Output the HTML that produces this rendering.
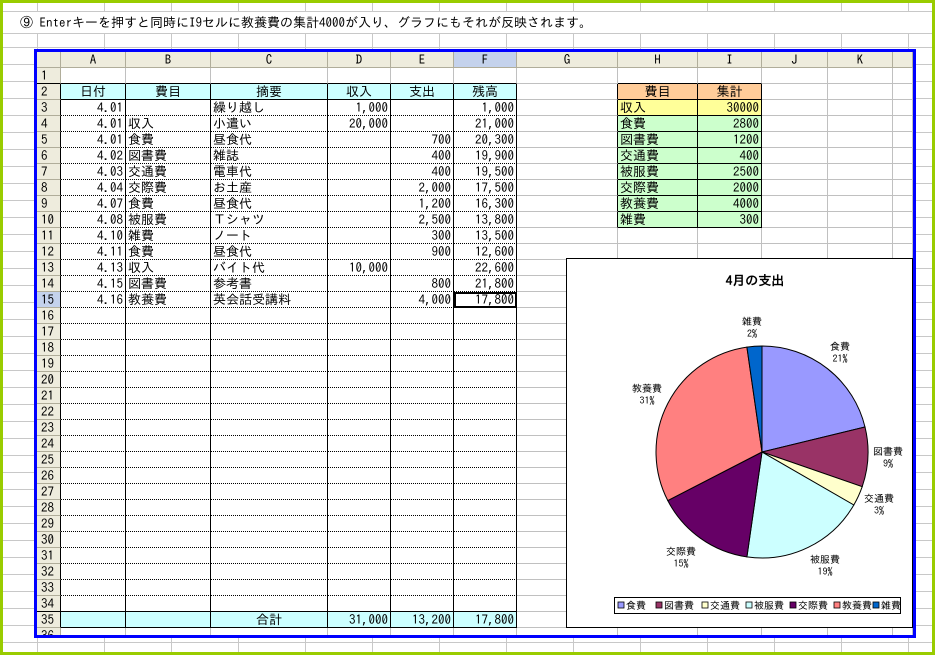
<!DOCTYPE html>
<html><head><meta charset="utf-8">
<style>
*{margin:0;padding:0;box-sizing:border-box}
body{width:935px;height:655px;overflow:hidden;background:#fff;font-family:"IPAGothic","Liberation Mono","Noto Sans CJK JP",monospace;font-size:13px;color:#000;position:relative}
#bg{position:absolute;left:0;top:0;width:935px;height:655px;border:3px solid #99cc00;
background-image:linear-gradient(to right,#c8c8c8 1px,transparent 1px),linear-gradient(to bottom,#c8c8c8 1px,transparent 1px);
background-size:67px 100%,100% 17px;background-position:34px 0,0 10px}
#tx{position:absolute;left:3px;top:11px;width:929px;height:23px;background:#fff;border-top:1px solid #c8c8c8;border-bottom:1px solid #c8c8c8;padding-left:17px;line-height:22px;font-size:13px}
#frame{position:absolute;left:34px;top:49px;width:882px;height:589px;border:3px solid #0000ff;background:#fff;overflow:hidden}
table{border-collapse:separate;border-spacing:0;table-layout:fixed;width:876px}
td{height:16px;padding:0 2px;line-height:15px;border-right:1px solid #c0c0c0;border-bottom:1px solid #c0c0c0;white-space:nowrap;overflow:hidden;font-size:13px}
tr.h td{background:#eeecdd;text-align:center;border-color:#b0ad9a}
td.rn{background:#eeecdd;text-align:left;padding-left:4px;border-color:#b0ad9a}
td.sel{background:#c4d2ec !important}
td.d{border-right:1px solid #000;border-bottom:1px dotted #000}
td.hd{background:#ccffff;border-right:1px solid #000;border-bottom:1px solid #000;text-align:center}
td.tt{background:#ccffff;border-right:1px solid #000;border-bottom:1px solid #000}
td.bb{border-bottom:1px solid #000}
td.br{border-right:1px solid #000}
.r{text-align:right}
td.sh{background:#ffcc99;border-right:1px solid #000;border-bottom:1px solid #000;text-align:center}
td.sy{background:#ffff99;border-right:1px solid #000;border-bottom:1px solid #000}
td.sg{background:#ccffcc;border-right:1px solid #000;border-bottom:1px solid #000}
#chart{position:absolute;left:566px;top:258px}
</style></head><body>
<div id="bg"></div>
<div id="tx">⑨ Enterキーを押すと同時にI9セルに教養費の集計4000が入り、グラフにもそれが反映されます。</div>
<div id="frame">
<table>
<colgroup><col style="width:24px"><col style="width:65px"><col style="width:85px"><col style="width:117px"><col style="width:63px"><col style="width:63px"><col style="width:63px"><col style="width:101px"><col style="width:80px"><col style="width:64px"><col style="width:66px"><col style="width:65px"><col style="width:20px"></colgroup>
<tr class="h"><td></td><td>A</td><td>B</td><td>C</td><td>D</td><td>E</td><td class="sel">F</td><td>G</td><td>H</td><td>I</td><td>J</td><td>K</td><td></td></tr>
<tr><td class="rn bb">1</td><td class="bb"></td><td class="bb"></td><td class="bb"></td><td class="bb"></td><td class="bb"></td><td class="bb"></td><td></td><td class="bb"></td><td class="bb"></td><td></td><td></td><td></td></tr>
<tr><td class="rn br">2</td><td class="hd">日付</td><td class="hd">費目</td><td class="hd">摘要</td><td class="hd">収入</td><td class="hd">支出</td><td class="hd">残高</td><td class="br"></td><td class="sh">費目</td><td class="sh">集計</td><td></td><td></td><td></td></tr>
<tr><td class="rn br">3</td><td class="d r">4.01</td><td class="d"></td><td class="d">繰り越し</td><td class="d r">1,000</td><td class="d r"></td><td class="d r">1,000</td><td class="br"></td><td class="sy">収入</td><td class="sy r">30000</td><td></td><td></td><td></td></tr>
<tr><td class="rn br">4</td><td class="d r">4.01</td><td class="d">収入</td><td class="d">小遣い</td><td class="d r">20,000</td><td class="d r"></td><td class="d r">21,000</td><td class="br"></td><td class="sg">食費</td><td class="sg r">2800</td><td></td><td></td><td></td></tr>
<tr><td class="rn br">5</td><td class="d r">4.01</td><td class="d">食費</td><td class="d">昼食代</td><td class="d r"></td><td class="d r">700</td><td class="d r">20,300</td><td class="br"></td><td class="sg">図書費</td><td class="sg r">1200</td><td></td><td></td><td></td></tr>
<tr><td class="rn br">6</td><td class="d r">4.02</td><td class="d">図書費</td><td class="d">雑誌</td><td class="d r"></td><td class="d r">400</td><td class="d r">19,900</td><td class="br"></td><td class="sg">交通費</td><td class="sg r">400</td><td></td><td></td><td></td></tr>
<tr><td class="rn br">7</td><td class="d r">4.03</td><td class="d">交通費</td><td class="d">電車代</td><td class="d r"></td><td class="d r">400</td><td class="d r">19,500</td><td class="br"></td><td class="sg">被服費</td><td class="sg r">2500</td><td></td><td></td><td></td></tr>
<tr><td class="rn br">8</td><td class="d r">4.04</td><td class="d">交際費</td><td class="d">お土産</td><td class="d r"></td><td class="d r">2,000</td><td class="d r">17,500</td><td class="br"></td><td class="sg">交際費</td><td class="sg r">2000</td><td></td><td></td><td></td></tr>
<tr><td class="rn br">9</td><td class="d r">4.07</td><td class="d">食費</td><td class="d">昼食代</td><td class="d r"></td><td class="d r">1,200</td><td class="d r">16,300</td><td class="br"></td><td class="sg">教養費</td><td class="sg r">4000</td><td></td><td></td><td></td></tr>
<tr><td class="rn br">10</td><td class="d r">4.08</td><td class="d">被服費</td><td class="d">Ｔシャツ</td><td class="d r"></td><td class="d r">2,500</td><td class="d r">13,800</td><td class="br"></td><td class="sg">雑費</td><td class="sg r">300</td><td></td><td></td><td></td></tr>
<tr><td class="rn br">11</td><td class="d r">4.10</td><td class="d">雑費</td><td class="d">ノート</td><td class="d r"></td><td class="d r">300</td><td class="d r">13,500</td><td></td><td></td><td></td><td></td><td></td><td></td></tr>
<tr><td class="rn br">12</td><td class="d r">4.11</td><td class="d">食費</td><td class="d">昼食代</td><td class="d r"></td><td class="d r">900</td><td class="d r">12,600</td><td></td><td></td><td></td><td></td><td></td><td></td></tr>
<tr><td class="rn br">13</td><td class="d r">4.13</td><td class="d">収入</td><td class="d">バイト代</td><td class="d r">10,000</td><td class="d r"></td><td class="d r">22,600</td><td></td><td></td><td></td><td></td><td></td><td></td></tr>
<tr><td class="rn br">14</td><td class="d r">4.15</td><td class="d">図書費</td><td class="d">参考書</td><td class="d r"></td><td class="d r">800</td><td class="d r">21,800</td><td></td><td></td><td></td><td></td><td></td><td></td></tr>
<tr><td class="rn br sel">15</td><td class="d r">4.16</td><td class="d">教養費</td><td class="d">英会話受講料</td><td class="d r"></td><td class="d r">4,000</td><td class="d r" style="outline:2px solid #000;outline-offset:-2px">17,800</td><td></td><td></td><td></td><td></td><td></td><td></td></tr>
<tr><td class="rn br">16</td><td class="d"></td><td class="d"></td><td class="d"></td><td class="d"></td><td class="d"></td><td class="d"></td><td></td><td></td><td></td><td></td><td></td><td></td></tr>
<tr><td class="rn br">17</td><td class="d"></td><td class="d"></td><td class="d"></td><td class="d"></td><td class="d"></td><td class="d"></td><td></td><td></td><td></td><td></td><td></td><td></td></tr>
<tr><td class="rn br">18</td><td class="d"></td><td class="d"></td><td class="d"></td><td class="d"></td><td class="d"></td><td class="d"></td><td></td><td></td><td></td><td></td><td></td><td></td></tr>
<tr><td class="rn br">19</td><td class="d"></td><td class="d"></td><td class="d"></td><td class="d"></td><td class="d"></td><td class="d"></td><td></td><td></td><td></td><td></td><td></td><td></td></tr>
<tr><td class="rn br">20</td><td class="d"></td><td class="d"></td><td class="d"></td><td class="d"></td><td class="d"></td><td class="d"></td><td></td><td></td><td></td><td></td><td></td><td></td></tr>
<tr><td class="rn br">21</td><td class="d"></td><td class="d"></td><td class="d"></td><td class="d"></td><td class="d"></td><td class="d"></td><td></td><td></td><td></td><td></td><td></td><td></td></tr>
<tr><td class="rn br">22</td><td class="d"></td><td class="d"></td><td class="d"></td><td class="d"></td><td class="d"></td><td class="d"></td><td></td><td></td><td></td><td></td><td></td><td></td></tr>
<tr><td class="rn br">23</td><td class="d"></td><td class="d"></td><td class="d"></td><td class="d"></td><td class="d"></td><td class="d"></td><td></td><td></td><td></td><td></td><td></td><td></td></tr>
<tr><td class="rn br">24</td><td class="d"></td><td class="d"></td><td class="d"></td><td class="d"></td><td class="d"></td><td class="d"></td><td></td><td></td><td></td><td></td><td></td><td></td></tr>
<tr><td class="rn br">25</td><td class="d"></td><td class="d"></td><td class="d"></td><td class="d"></td><td class="d"></td><td class="d"></td><td></td><td></td><td></td><td></td><td></td><td></td></tr>
<tr><td class="rn br">26</td><td class="d"></td><td class="d"></td><td class="d"></td><td class="d"></td><td class="d"></td><td class="d"></td><td></td><td></td><td></td><td></td><td></td><td></td></tr>
<tr><td class="rn br">27</td><td class="d"></td><td class="d"></td><td class="d"></td><td class="d"></td><td class="d"></td><td class="d"></td><td></td><td></td><td></td><td></td><td></td><td></td></tr>
<tr><td class="rn br">28</td><td class="d"></td><td class="d"></td><td class="d"></td><td class="d"></td><td class="d"></td><td class="d"></td><td></td><td></td><td></td><td></td><td></td><td></td></tr>
<tr><td class="rn br">29</td><td class="d"></td><td class="d"></td><td class="d"></td><td class="d"></td><td class="d"></td><td class="d"></td><td></td><td></td><td></td><td></td><td></td><td></td></tr>
<tr><td class="rn br">30</td><td class="d"></td><td class="d"></td><td class="d"></td><td class="d"></td><td class="d"></td><td class="d"></td><td></td><td></td><td></td><td></td><td></td><td></td></tr>
<tr><td class="rn br">31</td><td class="d"></td><td class="d"></td><td class="d"></td><td class="d"></td><td class="d"></td><td class="d"></td><td></td><td></td><td></td><td></td><td></td><td></td></tr>
<tr><td class="rn br">32</td><td class="d"></td><td class="d"></td><td class="d"></td><td class="d"></td><td class="d"></td><td class="d"></td><td></td><td></td><td></td><td></td><td></td><td></td></tr>
<tr><td class="rn br">33</td><td class="d"></td><td class="d"></td><td class="d"></td><td class="d"></td><td class="d"></td><td class="d"></td><td></td><td></td><td></td><td></td><td></td><td></td></tr>
<tr><td class="rn br bb">34</td><td class="d bb"></td><td class="d bb"></td><td class="d bb"></td><td class="d bb"></td><td class="d bb"></td><td class="d bb"></td><td></td><td></td><td></td><td></td><td></td><td></td></tr>
<tr><td class="rn br">35</td><td class="tt"></td><td class="tt"></td><td class="tt" style="text-align:center">合計</td><td class="tt r">31,000</td><td class="tt r">13,200</td><td class="tt r">17,800</td><td></td><td></td><td></td><td></td><td></td><td></td></tr>
<tr><td class="rn">36</td><td></td><td></td><td></td><td></td><td></td><td></td><td></td><td></td><td></td><td></td><td></td><td></td></tr>
</table>
</div>
<svg id="chart" width="347" height="370" viewBox="566 258 347 370" font-family="IPAGothic,'Noto Sans CJK JP',sans-serif" font-size="10">
<rect x="566.5" y="258.5" width="346" height="369" fill="#fff" stroke="#000"/>
<text x="755" y="285" font-size="13" font-weight="bold" text-anchor="middle">4月の支出</text>
<g stroke="#000" stroke-width="1">
<path d="M762,452 L762,346 A106,106 0 0 1 865,427 Z" fill="#9999ff"/>
<path d="M762,452 L865,427 A106,106 0 0 1 862.2,486.7 Z" fill="#993366"/>
<path d="M762,452 L862.2,486.7 A106,106 0 0 1 853.8,505 Z" fill="#ffffcc"/>
<path d="M762,452 L853.8,505 A106,106 0 0 1 746.9,556.9 Z" fill="#ccffff"/>
<path d="M762,452 L746.9,556.9 A106,106 0 0 1 667.8,500.6 Z" fill="#660066"/>
<path d="M762,452 L667.8,500.6 A106,106 0 0 1 746.9,347.1 Z" fill="#ff8080"/>
<path d="M762,452 L746.9,347.1 A106,106 0 0 1 762,346 Z" fill="#0066cc"/>
</g>
<g text-anchor="middle">
<text x="752" y="325">雑費</text><text x="752" y="337">2%</text>
<text x="840" y="350">食費</text><text x="840" y="362">21%</text>
<text x="888" y="455">図書費</text><text x="888" y="467">9%</text>
<text x="879" y="502">交通費</text><text x="879" y="514">3%</text>
<text x="825" y="563">被服費</text><text x="825" y="575">19%</text>
<text x="681" y="555">交際費</text><text x="681" y="567">15%</text>
<text x="647" y="392">教養費</text><text x="647" y="404">31%</text>
</g>
<rect x="614.5" y="597.5" width="286" height="16" fill="#fff" stroke="#000"/>
<g stroke="#000" stroke-width="0.8">
<rect x="618" y="602" width="6" height="6" fill="#9999ff"/>
<rect x="656" y="602" width="6" height="6" fill="#993366"/>
<rect x="702" y="602" width="6" height="6" fill="#ffffcc"/>
<rect x="746" y="602" width="6" height="6" fill="#ccffff"/>
<rect x="790" y="602" width="6" height="6" fill="#660066"/>
<rect x="834" y="602" width="6" height="6" fill="#ff8080"/>
<rect x="873" y="602" width="6" height="6" fill="#0066cc"/>
</g>
<g font-size="10">
<text x="626" y="609">食費</text>
<text x="664" y="609">図書費</text>
<text x="710" y="609">交通費</text>
<text x="754" y="609">被服費</text>
<text x="798" y="609">交際費</text>
<text x="842" y="609">教養費</text>
<text x="881" y="609">雑費</text>
</g>
</svg>
</body></html>
